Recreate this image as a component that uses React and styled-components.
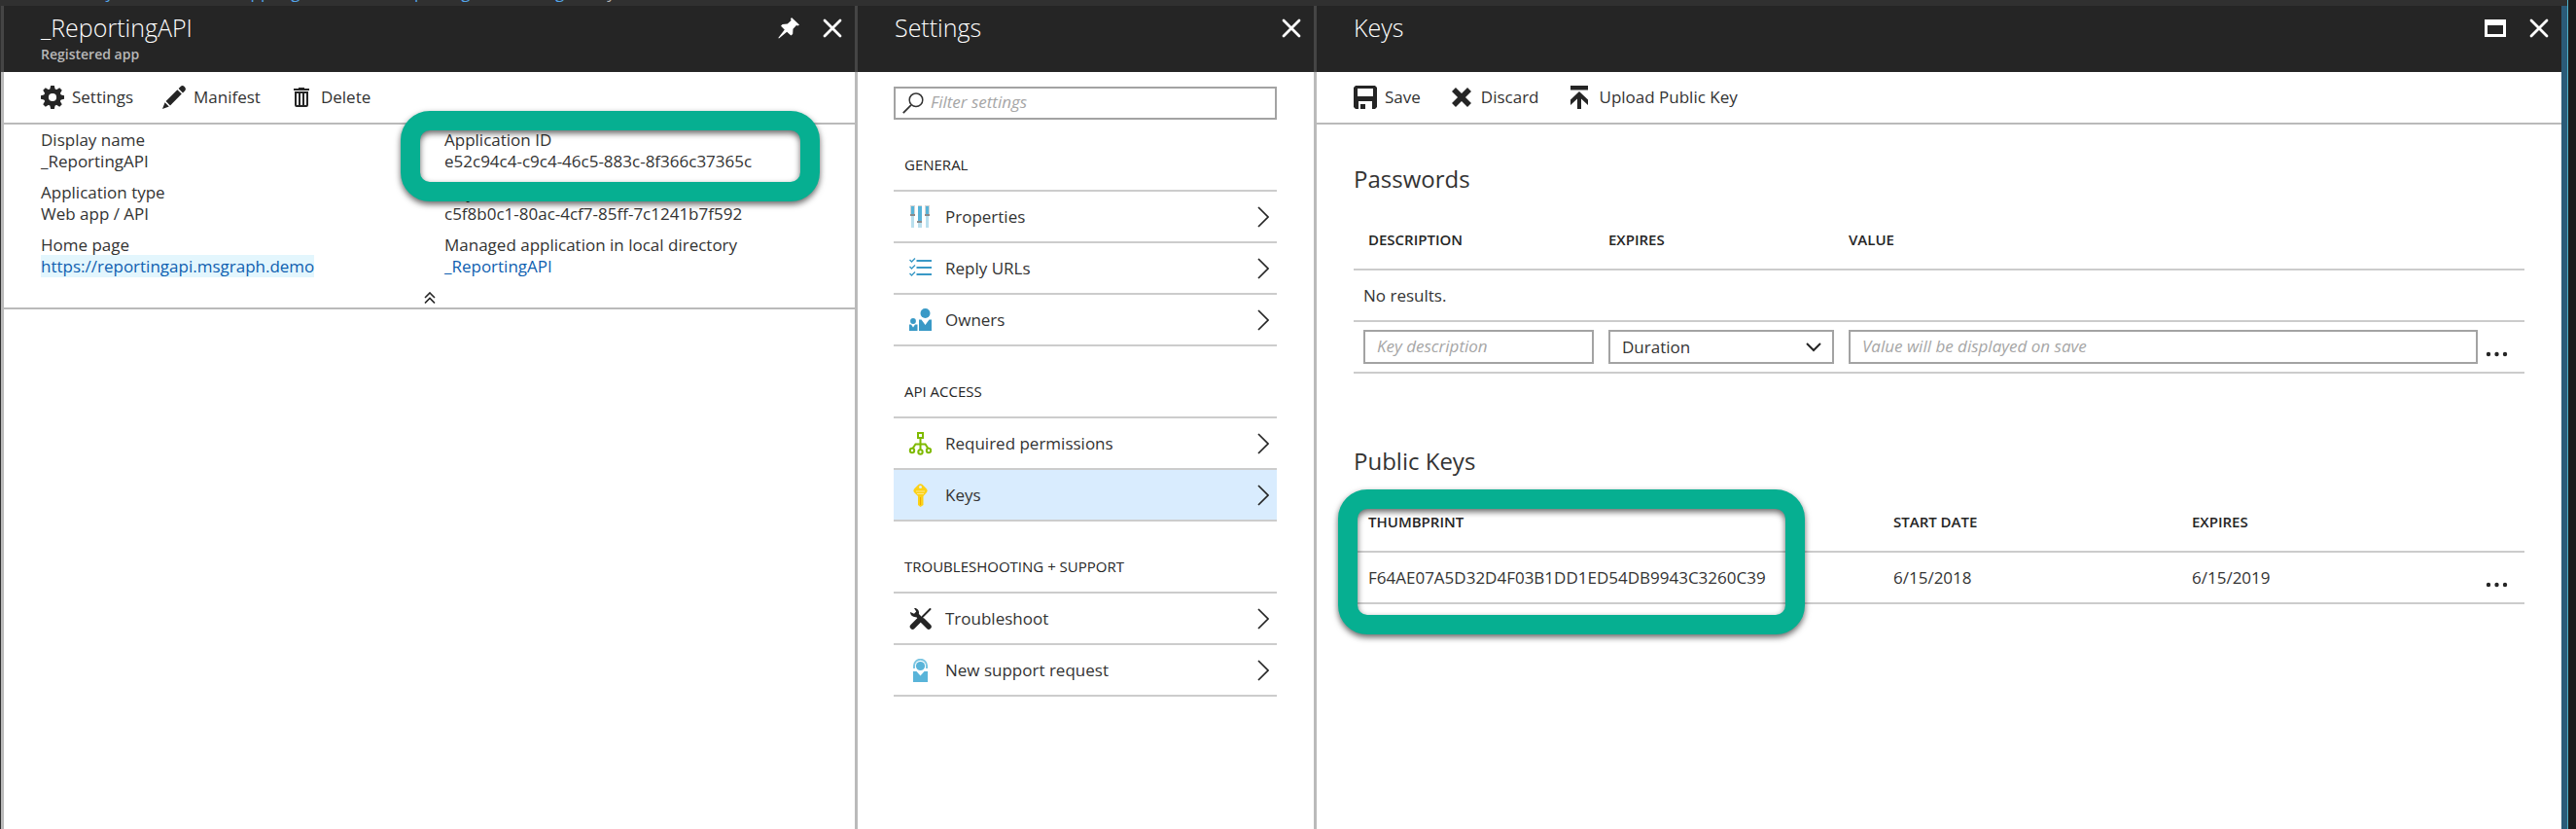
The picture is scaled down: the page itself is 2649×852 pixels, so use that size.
import React from "react";
import styled, { createGlobalStyle, css } from "styled-components";

const ink = "#252525";
const rule = "#cccccc";
const edge = "#bababa";

const GlobalStyle = createGlobalStyle`
  *, *::before, *::after { box-sizing: border-box; }
  body {
    margin: 0;
    background: #1c1c1c;
    color: #333333;
    font: 400 17px/22px "Open Sans", "Noto Sans", sans-serif;
  }
  button, input, select { font: inherit; color: inherit; }
  h1, h2, h3, p, dl, dd, ul { margin: 0; padding: 0; font-weight: inherit; }
  ul { list-style: none; }
  a { color: #0f5fb0; text-decoration: none; }
`;

/* ---------- shell ---------- */

const Shell = styled.div`
  display: flex;
  flex-direction: column;
  min-height: 100vh;
  margin-right: 8px;
  border-right: 1px solid #4fb0c6;
`;

const Breadcrumb = styled.nav`
  display: flex;
  gap: 16px;
  align-items: flex-end;
  height: 6px;
  padding-left: 44px;
  overflow: hidden;
  background: #303030;
  color: #b4b4b4;
  line-height: 28px;
  white-space: nowrap;

  a { color: #54a5e8; }
`;

const Blades = styled.main`
  flex: 1;
  display: grid;
  grid-template-columns: 878fr 472fr 1283fr;
  border-left: 1px solid #303030;
  border-right: 6px solid #2b5b78;
`;

const Blade = styled.section`
  display: flex;
  flex-direction: column;
  min-width: 0;
`;

const BladeHeader = styled.header`
  display: flex;
  justify-content: space-between;
  height: 68px;
  padding: 5px 13px 0 38px;
  border-left: 3px solid #454545;
  background: ${ink};
  color: #ffffff;
`;

const BladeTitle = styled.h1`
  font-size: 25px;
  font-weight: 300;
  line-height: 34px;
`;

const BladeSubtitle = styled.p`
  color: #b8b8b8;
  font-size: 14px;
  font-weight: 600;
  line-height: 22px;
`;

const WindowButtons = styled.div`
  display: flex;
  gap: 24px;
  align-items: center;
  height: 36px;
`;

const IconButton = styled.button`
  display: grid;
  place-items: center;
  padding: 0;
  border: 0;
  background: none;
`;

const BladeBody = styled.div`
  flex: 1;
  border-left: 3px solid ${edge};
  background: #ffffff;
`;

const Toolbar = styled.div`
  display: flex;
  gap: 30px;
  height: 54px;
  padding-left: 38px;
  border-bottom: 2px solid ${edge};
`;

const ToolButton = styled.button`
  display: flex;
  gap: 8px;
  align-items: center;
  padding: 0;
  border: 0;
  background: none;
`;

/* ---------- essentials ---------- */

const Essentials = styled.div`
  border-bottom: 2px solid ${edge};
`;

const Properties = styled.dl`
  display: grid;
  grid-template-columns: 1fr 1fr;
  row-gap: 10px;
  padding: 5px 7px 0 38px;
`;

const Property = styled.div`
  position: relative;
`;

const PropertyLink = styled.a`
  ${(p) => p.$highlight && css`background: #e3f6fd;`}
`;

const Collapse = styled(IconButton)`
  width: 100%;
  height: 31px;
  padding-top: 10px;
`;

const Callout = styled.div`
  position: absolute;
  z-index: 1;
  border: 20px solid #06af91;
  border-radius: 30px;
  filter: drop-shadow(0 3px 3px rgba(0, 0, 0, 0.6));
  pointer-events: none;
`;

const IdCallout = styled(Callout)`
  top: -19px;
  left: -45px;
  right: 29px;
  height: 93px;
`;

const ThumbprintCallout = styled(Callout)`
  top: 15px;
  left: -16px;
  width: 480px;
  height: 149px;
`;

/* ---------- settings menu ---------- */

const Menu = styled.div`
  padding: 15px 38px 0 37px;
`;

const Filter = styled.label`
  display: flex;
  align-items: center;
  gap: 7px;
  height: 34px;
  padding-left: 7px;
  border: 2px solid #a3a3a3;

  input {
    flex: 1;
    min-width: 0;
    padding: 0 0 2px;
    border: 0;
    outline: 0;
    background: none;
  }
  input::placeholder { color: #a6a6a6; font-style: italic; opacity: 1; }
`;

const GroupTitle = styled.h2`
  padding: 36px 11px 16px;
  border-bottom: 2px solid ${rule};
  color: ${ink};
  font-size: 15px;
  line-height: 20px;
`;

const MenuItem = styled.a`
  display: flex;
  align-items: center;
  gap: 14px;
  height: 53px;
  padding: 0 8px 0 15px;
  border-bottom: 2px solid ${rule};
  background: ${(p) => (p.$active ? "#d9ecfe" : "none")};
  color: #333333;

  span { flex: 1; }
`;

/* ---------- keys ---------- */

const KeysContent = styled.div`
  padding: 42px 38px 0;
`;

const KeySection = styled.section`
  margin-bottom: 76px;
`;

const SectionTitle = styled.h2`
  font-size: 24px;
  line-height: 28px;
`;

const TableFrame = styled.div`
  position: relative;
`;

const Table = styled.table`
  width: 100%;
  table-layout: fixed;
  border-collapse: separate;
  border-spacing: 0;
  text-align: left;

  th, td { border-bottom: 2px solid ${rule}; }
  th {
    padding: 38px 0 20px;
    color: ${ink};
    font-size: 15px;
    font-weight: 600;
    line-height: 20px;
  }
  td { height: 53px; padding: 0; }
  th:first-child { padding-left: 15px; }
  td:first-child { padding-left: ${(p) => p.$inset}px; }
`;

const Col = styled.col`
  width: ${(p) => (p.$w ? p.$w + "px" : "auto")};
`;

const FieldCell = styled.td`
  && { padding-right: ${(p) => p.$gap}px; }
`;

const fieldBox = css`
  display: block;
  width: 100%;
  height: 35px;
  padding: 0 12px;
  border: 2px solid #a3a3a3;
  border-radius: 0;
  outline: 0;
  background: #ffffff;
`;

const TextField = styled.input`
  ${fieldBox}
  padding-bottom: 2px;
  &::placeholder { color: #a6a6a6; font-style: italic; opacity: 1; }
`;

const SelectWrap = styled.div`
  display: grid;
  align-items: center;
  > * { grid-area: 1 / 1; }
  svg { justify-self: end; margin-right: 13px; pointer-events: none; }
`;

const Select = styled.select`
  ${fieldBox}
  appearance: none;
`;

const MoreButton = styled(IconButton)`
  padding-top: 14px;
`;

/* ---------- icons ---------- */

const Svg = ({ w, h = w, children }) => (
  <svg width={w} height={h} viewBox={`0 0 ${w} ${h}`} aria-hidden="true">{children}</svg>
);

const CloseIcon = () => (
  <Svg w={20}><path d="M2 2 18 18M18 2 2 18" stroke="#fff" strokeWidth="2.8" strokeLinecap="round" /></Svg>
);

const PinIcon = () => (
  <Svg w={22}>
    <path fill="#fff" d="M14 0 22 7.5 20.5 8.5 19 8 15.5 11.8 15.2 17 13.4 18.6 9.2 14.8 1 21.6 .3 21 6.8 12.6 3 8.8 4.6 7 9.8 6.6 13.6 3 13 1.5Z" />
  </Svg>
);

const MaximizeIcon = () => (
  <Svg w={22} h={18}><path fill="#fff" fillRule="evenodd" d="M0 0H22V18H0ZM3 6V15H19V6Z" /></Svg>
);

const GearIcon = () => (
  <Svg w={24}>
    <g fill={ink}>
      {[0, 45, 90, 135].map((a) => (
        <path key={a} transform={`rotate(${a} 12 12)`} d="M10.2 0H13.8L15 5V19L13.8 24H10.2L9 19V5Z" />
      ))}
      <circle cx="12" cy="12" r="9" />
    </g>
    <circle cx="12" cy="12" r="4.1" fill="#fff" />
  </Svg>
);

const PencilIcon = () => (
  <Svg w={24}>
    <g fill={ink}>
      <path d="M0 24 2.6 17.2 6.8 21.4Z" />
      <path d="M3.6 16 15.4 4.2 19.8 8.6 8 20.4Z" />
      <path d="M16.6 3 18.6 1C19.8-.2 21.4-.2 22.6 1L23 1.4C24.2 2.6 24.2 4.2 23 5.4L21 7.4Z" />
    </g>
  </Svg>
);

const TrashIcon = () => (
  <Svg w={24}>
    <g fill={ink}>
      <path d="M9 2H15V3H20V5H4V3H9Z" />
      <path fillRule="evenodd" d="M5 6H19V20Q19 22 17 22H7Q5 22 5 20ZM7 8V20H9V8ZM11 8V20H13V8ZM15 8V20H17V8Z" />
    </g>
  </Svg>
);

const SaveIcon = () => (
  <Svg w={24}>
    <path fill={ink} fillRule="evenodd" d="M2 0H22L24 2V22L22 24H19V16H5V24H2L0 22V2ZM4 3V11H20V3ZM7 19H12V24H7Z" />
  </Svg>
);

const DiscardIcon = () => (
  <Svg w={24}><path d="M4 4 20 20M20 4 4 20" stroke={ink} strokeWidth="5.6" /></Svg>
);

const UploadIcon = () => (
  <Svg w={24}>
    <path fill={ink} d="M3 0H21V4.5H3ZM12 6 21 14.6V20L14 13.4V24H10V13.4L3 20V14.6Z" />
  </Svg>
);

const CollapseIcon = () => (
  <Svg w={12} h={12}>
    <path d="M1 6 6 1 11 6M1 11.5 6 6.5 11 11.5" fill="none" stroke={ink} strokeWidth="1.6" />
  </Svg>
);

const SearchIcon = () => (
  <Svg w={22}>
    <circle cx="14" cy="7.7" r="6.8" fill="none" stroke="#333" strokeWidth="1.5" />
    <path d="M9 12.8.8 21.2" stroke="#333" strokeWidth="1.8" />
  </Svg>
);

const ChevronIcon = () => (
  <Svg w={12} h={22}><path d="M1 1 11 11 1 21" fill="none" stroke={ink} strokeWidth="1.7" /></Svg>
);

const DownIcon = () => (
  <Svg w={16} h={10}><path d="M1 1 8 8 15 1" fill="none" stroke={ink} strokeWidth="2" /></Svg>
);

const DotsIcon = () => (
  <Svg w={24} h={6}>
    {[3, 11.5, 20].map((x) => <circle key={x} cx={x} cy="3" r="2.2" fill={ink} />)}
  </Svg>
);

const SlidersIcon = () => (
  <Svg w={24}>
    <path fill="#b9dfee" d="M3 10H6V23H3ZM10 18H14V23H10ZM18 10H21V23H18Z" />
    <path fill="#d4d4d4" d="M2 0H7V9H2ZM10 0H14V17H10ZM17 0H22V9H17Z" />
    <path fill="#57b4d9" d="M3 1H6V9H3ZM10 1H14V16H10ZM18 1H21V9H18Z" />
    <path fill="#8a8a8a" d="M2 9H7V11H2ZM9 16H14V18H9ZM17 9H22V11H17Z" />
  </Svg>
);

const ChecklistIcon = () => (
  <Svg w={24}>
    <g stroke="#3999c6" fill="none">
      {[4, 11, 18].map((y) => (
        <React.Fragment key={y}>
          <path d={`M8.5 ${y}H24`} strokeWidth="2" />
          <path d={`M1.5 ${y - 1}L3.5 ${y + 1}L7 ${y - 2.5}`} strokeWidth="1.4" />
        </React.Fragment>
      ))}
    </g>
  </Svg>
);

const OwnersIcon = () => (
  <Svg w={24}>
    <g fill="#3999c6">
      <circle cx="17.5" cy="5" r="5" />
      <path d="M11 11.5H13.5L17.5 17 21.5 11.5H24V23H11Z" />
      <circle cx="5" cy="13" r="2.9" />
      <path d="M1 16.5H3L5 19.5 7 16.5H9.5V23H1Z" />
    </g>
  </Svg>
);

const PermissionsIcon = () => (
  <Svg w={24}>
    <g stroke="#7fba00" strokeWidth="2" fill="none">
      <rect x="10" y="1" width="5" height="5" />
      <path d="M12.5 6V18M4.5 17 7.5 12.5H17.5L20.5 17" />
      <circle cx="4" cy="19" r="2.2" />
      <circle cx="12.5" cy="20.5" r="2.2" />
      <circle cx="21" cy="19" r="2.2" />
    </g>
  </Svg>
);

const KeyIcon = () => (
  <Svg w={24}>
    <path fill="#fcd116" fillRule="evenodd" d="M10.5 1Q12.5-.5 14.5 1L18.5 5Q20.5 7 19 9L15.5 13V22L12.5 24 10 22V13L6 9Q4.5 7 6.5 5ZM12.5 2A1.5 1.5 0 1 0 12.5 5 1.5 1.5 0 1 0 12.5 2Z" />
    <path d="M8 8H17M9 10.5H16" stroke="#fde88a" strokeWidth="1" />
    <path d="M12.5 14V22" stroke="#f0a800" strokeWidth="1" />
  </Svg>
);

const ToolsIcon = () => (
  <Svg w={24}>
    <path d="M22.5 2 13 11.5" stroke={ink} strokeWidth="2" strokeLinecap="round" />
    <path d="M12 12.5 4.5 20" stroke={ink} strokeWidth="5.5" strokeLinecap="round" />
    <path d="M9 8 12 11" stroke={ink} strokeWidth="4" />
    <path d="M15 14 21 20" stroke={ink} strokeWidth="5.5" strokeLinecap="round" />
    <path fill={ink} d="M6 1C9 .5 11.5 3.5 11 6.5L9 10C5.5 11 2 8.500 2 5L6 6.800 8.200 4.500Z" />
  </Svg>
);

const SupportIcon = () => (
  <Svg w={24}>
    <path d="M6 10V7A6.5 6.2 0 0 1 19 7V10" fill="none" stroke="#7cc6e2" strokeWidth="2" />
    <circle cx="12.5" cy="7.5" r="4.6" fill="#59b4d9" />
    <path fill="#59b4d9" d="M5 13H8.5L12.5 17.5 16.5 13H20V24H5Z" />
  </Svg>
);

/* ---------- content ---------- */

const menuGroups = [
  { title: "GENERAL", items: [["Properties", SlidersIcon], ["Reply URLs", ChecklistIcon], ["Owners", OwnersIcon]] },
  { title: "API ACCESS", items: [["Required permissions", PermissionsIcon], ["Keys", KeyIcon]] },
  { title: "TROUBLESHOOTING + SUPPORT", items: [["Troubleshoot", ToolsIcon], ["New support request", SupportIcon]] },
];

const Tool = ({ icon: Icon, children }) => (
  <ToolButton type="button"><Icon />{children}</ToolButton>
);

const Field = ({ label, children, extra }) => (
  <Property>
    <dt>{label}</dt>
    <dd>{children}</dd>
    {extra}
  </Property>
);

const CloseButton = () => <IconButton type="button" aria-label="Close"><CloseIcon /></IconButton>;

const AppBlade = () => (
  <Blade>
    <BladeHeader>
      <div>
        <BladeTitle>_ReportingAPI</BladeTitle>
        <BladeSubtitle>Registered app</BladeSubtitle>
      </div>
      <WindowButtons>
        <IconButton type="button" aria-label="Pin"><PinIcon /></IconButton>
        <CloseButton />
      </WindowButtons>
    </BladeHeader>
    <BladeBody>
      <Toolbar>
        <Tool icon={GearIcon}>Settings</Tool>
        <Tool icon={PencilIcon}>Manifest</Tool>
        <Tool icon={TrashIcon}>Delete</Tool>
      </Toolbar>
      <Essentials>
        <Properties>
          <Field label="Display name">_ReportingAPI</Field>
          <Field label="Application ID" extra={<IdCallout />}>e52c94c4-c9c4-46c5-883c-8f366c37365c</Field>
          <Field label="Application type">Web app / API</Field>
          <Field label="Object ID">c5f8b0c1-80ac-4cf7-85ff-7c1241b7f592</Field>
          <Field label="Home page">
            <PropertyLink $highlight href="#home">https://reportingapi.msgraph.demo</PropertyLink>
          </Field>
          <Field label="Managed application in local directory">
            <PropertyLink href="#managed">_ReportingAPI</PropertyLink>
          </Field>
        </Properties>
        <Collapse type="button" aria-label="Collapse"><CollapseIcon /></Collapse>
      </Essentials>
    </BladeBody>
  </Blade>
);

const SettingsBlade = () => (
  <Blade>
    <BladeHeader>
      <BladeTitle>Settings</BladeTitle>
      <WindowButtons><CloseButton /></WindowButtons>
    </BladeHeader>
    <BladeBody>
      <Menu>
        <Filter>
          <SearchIcon />
          <input type="text" placeholder="Filter settings" aria-label="Filter settings" />
        </Filter>
        {menuGroups.map((group) => (
          <section key={group.title}>
            <GroupTitle>{group.title}</GroupTitle>
            <ul>
              {group.items.map(([name, Icon]) => (
                <li key={name}>
                  <MenuItem href="#setting" $active={name === "Keys"}>
                    <Icon />
                    <span>{name}</span>
                    <ChevronIcon />
                  </MenuItem>
                </li>
              ))}
            </ul>
          </section>
        ))}
      </Menu>
    </BladeBody>
  </Blade>
);

const More = () => <MoreButton type="button" aria-label="More"><DotsIcon /></MoreButton>;

const KeysBlade = () => (
  <Blade>
    <BladeHeader>
      <BladeTitle>Keys</BladeTitle>
      <WindowButtons>
        <IconButton type="button" aria-label="Maximize"><MaximizeIcon /></IconButton>
        <CloseButton />
      </WindowButtons>
    </BladeHeader>
    <BladeBody>
      <Toolbar>
        <Tool icon={SaveIcon}>Save</Tool>
        <Tool icon={DiscardIcon}>Discard</Tool>
        <Tool icon={UploadIcon}>Upload Public Key</Tool>
      </Toolbar>
      <KeysContent>
        <KeySection>
          <SectionTitle>Passwords</SectionTitle>
          <Table $inset={10}>
            <colgroup><Col $w={262} /><Col $w={247} /><Col /><Col $w={40} /></colgroup>
            <thead>
              <tr><th>DESCRIPTION</th><th>EXPIRES</th><th>VALUE</th><th aria-label="Actions" /></tr>
            </thead>
            <tbody>
              <tr><td colSpan={4}>No results.</td></tr>
              <tr>
                <FieldCell $gap={15}>
                  <TextField type="text" placeholder="Key description" aria-label="Key description" />
                </FieldCell>
                <FieldCell $gap={15}>
                  <SelectWrap>
                    <Select aria-label="Duration"><option>Duration</option></Select>
                    <DownIcon />
                  </SelectWrap>
                </FieldCell>
                <FieldCell $gap={8}>
                  <TextField type="text" placeholder="Value will be displayed on save" aria-label="Value" />
                </FieldCell>
                <td><More /></td>
              </tr>
            </tbody>
          </Table>
        </KeySection>
        <KeySection>
          <SectionTitle>Public Keys</SectionTitle>
          <TableFrame>
            <Table $inset={15}>
              <colgroup><Col $w={555} /><Col $w={307} /><Col /><Col $w={40} /></colgroup>
              <thead>
                <tr><th>THUMBPRINT</th><th>START DATE</th><th>EXPIRES</th><th aria-label="Actions" /></tr>
              </thead>
              <tbody>
                <tr>
                  <td>F64AE07A5D32D4F03B1DD1ED54DB9943C3260C39</td>
                  <td>6/15/2018</td>
                  <td>6/15/2019</td>
                  <td><More /></td>
                </tr>
              </tbody>
            </Table>
            <ThumbprintCallout />
          </TableFrame>
        </KeySection>
      </KeysContent>
    </BladeBody>
  </Blade>
);

export default function App() {
  return (
    <>
      <GlobalStyle />
      <Shell>
        <Breadcrumb aria-label="Breadcrumb">
          <a href="#directory">Directory</a>
          <a href="#registrations">Contoso 365 - App registrations</a>
          <a href="#app">_ReportingAPI</a>
          <a href="#settings">Settings</a>
          <span>Keys</span>
        </Breadcrumb>
        <Blades>
          <AppBlade />
          <SettingsBlade />
          <KeysBlade />
        </Blades>
      </Shell>
    </>
  );
}
